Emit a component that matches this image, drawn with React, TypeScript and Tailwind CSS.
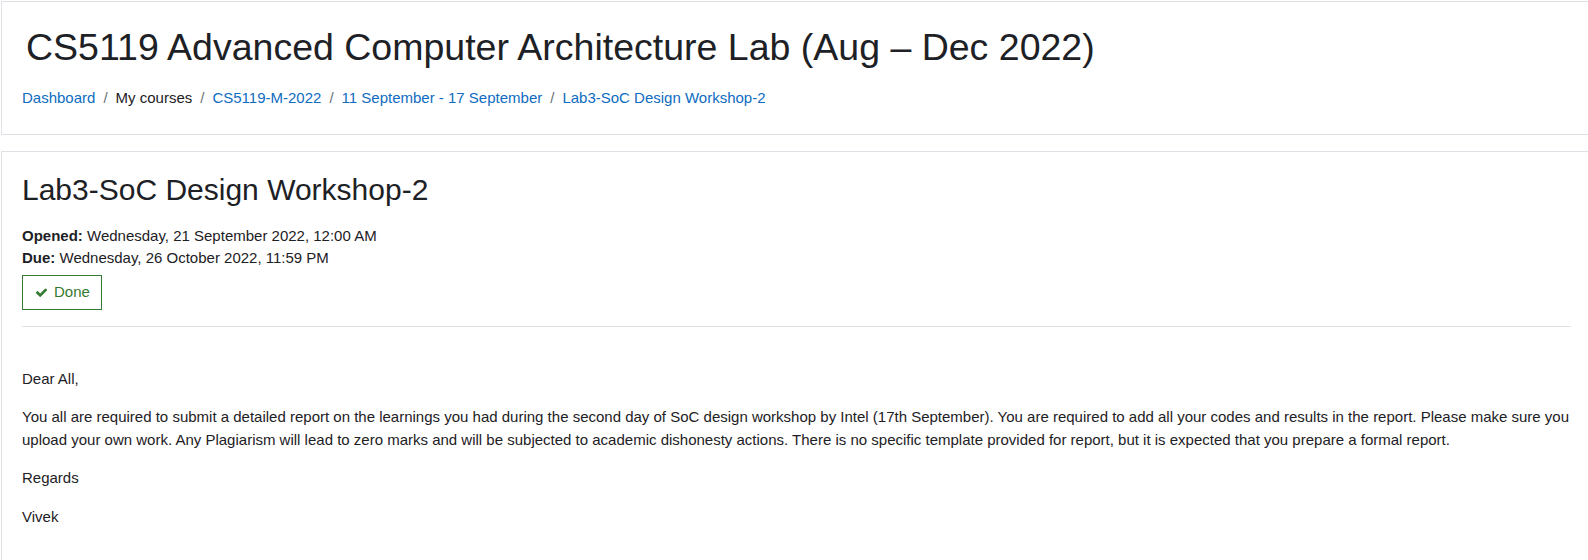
import React from "react";

const font = { fontFamily: '"Liberation Sans", Arial, sans-serif' };

function Check() {
  return (
    <svg viewBox="0 0 1792 1792" className="mr-[6px] h-[13px] w-[13px]" fill="currentColor">
      <path d="M1671 566q0 40-28 68l-724 724-136 136q-28 28-68 28t-68-28l-136-136-362-362q-28-28-28-68t28-68l136-136q28-28 68-28t68 28l294 295 656-657q28-28 68-28t68 28l136 136q28 28 28 68z" />
    </svg>
  );
}

export default function App() {
  return (
    <div
      className="w-[1588px] h-[560px] overflow-hidden bg-white pl-px pt-px text-[15px] leading-[1.5] text-[#1d2125]"
      style={font}
    >
      <div className="w-[1591px] border border-[#dee2e6] bg-white px-5 pt-[23px] pb-[24px]">
        <h1 className="text-[37.5px] leading-[1.2] font-normal text-[#1d2125] pl-[4px]">
          CS5119 Advanced Computer Architecture Lab (Aug – Dec 2022)
        </h1>
        <nav className="mt-[17px] flex items-center text-[15px] leading-[1.5]">
          <a className="text-[#0f6cbf]" href="#">Dashboard</a>
          <span className="px-2 text-[#6a737b]">/</span>
          <span className="text-[#1d2125]">My courses</span>
          <span className="px-2 text-[#6a737b]">/</span>
          <a className="text-[#0f6cbf]" href="#">CS5119-M-2022</a>
          <span className="px-2 text-[#6a737b]">/</span>
          <a className="text-[#0f6cbf]" href="#">11 September - 17 September</a>
          <span className="px-2 text-[#6a737b]">/</span>
          <a className="text-[#0f6cbf]" href="#">Lab3-SoC Design Workshop-2</a>
        </nav>
      </div>

      <div className="mt-4 w-[1591px] border border-[#dee2e6] bg-white px-5 pt-5 pb-10">
        <h2 className="text-[30px] leading-[1.2] font-normal">Lab3-SoC Design Workshop-2</h2>
        <div className="mt-[17px]">
          <div>
            <strong className="font-bold">Opened:</strong> Wednesday, 21 September 2022, 12:00 AM
          </div>
          <div>
            <strong className="font-bold">Due:</strong> Wednesday, 26 October 2022, 11:59 PM
          </div>
        </div>
        <div className="mt-[5px] inline-flex h-[35px] items-center border border-[#357a32] pl-[12px] pr-[11px] text-[#357a32]">
          <Check />
          <span>Done</span>
        </div>
        <hr className="mt-[16px] border-0 border-t border-[#dee2e6]" />
        <div className="mt-[41px]">
          <p className="mb-4">Dear All,</p>
          <p className="mb-4">
            You all are required to submit a detailed report on the learnings you had during the second day of SoC design workshop by Intel (17th September). You are required to add all your codes and results in the report. Please make sure you upload your own work. Any Plagiarism will lead to zero marks and will be subjected to academic dishonesty actions. There is no specific template provided for report, but it is expected that you prepare a formal report.
          </p>
          <p className="mb-4">Regards</p>
          <p className="mb-4">Vivek</p>
        </div>
      </div>
    </div>
  );
}
